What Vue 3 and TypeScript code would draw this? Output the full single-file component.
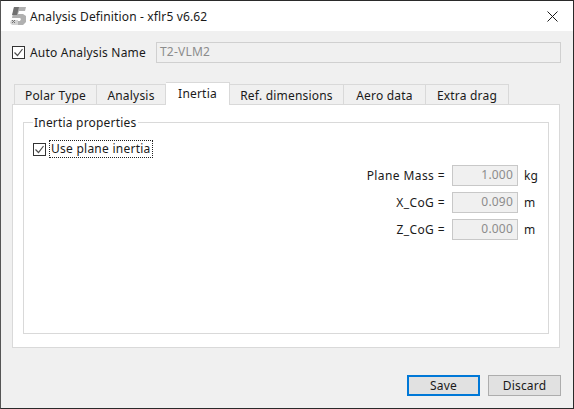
<script setup lang="ts">
const tabs: string[] = ['Polar Type', 'Analysis', 'Inertia', 'Ref. dimensions', 'Aero data', 'Extra drag']
const fields = [
  { label: 'Plane Mass =', value: '1.000', unit: 'kg' },
  { label: 'X_CoG =', value: '0.090', unit: 'm' },
  { label: 'Z_CoG =', value: '0.000', unit: 'm' },
]
const widths: Record<string, number> = { 'Polar Type': 83, Analysis: 69, Inertia: 64, 'Ref. dimensions': 114, 'Aero data': 82, 'Extra drag': 83 }
</script>

<template>
  <div class="window">
    <header class="titlebar">
      <svg class="logo" width="18" height="20" viewBox="0 0 18 20">
        <path d="M5 1h12l-1 4H10L9 8h5l3 2v6l-3 3H8v-4h3l1-2-1-1H3z" fill="#b0b0b0" />
        <path d="M5 1h5L9 5 8 9H3z" fill="#707070" />
        <path d="M2 14h7v5H3l-2-2z" fill="#d2d2d2" />
        <path d="M3 14l3 3M6 14l-3 3" stroke="#707070" stroke-width="1" fill="none" />
      </svg>
      <span class="title">Analysis Definition - xflr5 v6.62</span>
      <svg class="close" width="11" height="11" viewBox="0 0 11 11">
        <path d="M.5.5l10 10M10.5.5l-10 10" stroke="#1a1a1a" stroke-width="1" fill="none" />
      </svg>
    </header>
    <main class="body">
      <div class="name-row">
        <span class="check">
          <svg width="11" height="11" viewBox="0 0 11 11"><path d="M1.5 5.5l3 3 5-6.5" stroke="#4d4d4d" stroke-width="1.2" fill="none" /></svg>
        </span>
        <span class="name-label">Auto Analysis Name</span>
        <div class="name-input">T2-VLM2</div>
      </div>
      <div class="tabs">
        <div
          v-for="t in tabs"
          :key="t"
          class="tab"
          :class="{ active: t === 'Inertia' }"
          :style="{ width: widths[t] + 'px' }"
        >{{ t }}</div>
      </div>
      <section class="panel">
        <fieldset class="group">
          <legend>Inertia properties</legend>
          <div class="use-row">
            <span class="check">
              <svg width="11" height="11" viewBox="0 0 11 11"><path d="M1.5 5.5l3 3 5-6.5" stroke="#4d4d4d" stroke-width="1.2" fill="none" /></svg>
            </span>
            <span class="focus">Use plane inertia</span>
          </div>
          <div class="fields">
            <div v-for="f in fields" :key="f.label" class="field">
              <span class="flabel">{{ f.label }}</span>
              <div class="finput">{{ f.value }}</div>
              <span class="funit">{{ f.unit }}</span>
            </div>
          </div>
        </fieldset>
      </section>
      <footer class="actions">
        <button class="btn primary">Save</button>
        <button class="btn">Discard</button>
      </footer>
    </main>
  </div>
</template>

<style>
html, body { margin: 0; padding: 0; }
</style>

<style scoped>
.window {
  width: 574px;
  height: 409px;
  box-sizing: border-box;
  border: 1px solid #2a2a2a;
  border-left-color: #555;
  display: flex;
  flex-direction: column;
  font-family: "Noto Sans", "Open Sans", sans-serif;
  font-size: 12px;
  color: #1a1a1a;
  background: #f0f0f0;
}
.titlebar {
  height: 30px;
  flex: none;
  background: #fff;
  display: flex;
  align-items: center;
  padding: 0 15px 0 8px;
}
.logo { flex: none; }
.title { margin-left: 3px; font-size: 12px; letter-spacing: 0.14px; }
.close { margin-left: auto; }
.body {
  flex: 1;
  display: flex;
  flex-direction: column;
  padding: 0 12px 0 11px;
  min-height: 0;
}
.name-row {
  display: flex;
  align-items: center;
  margin-top: 11px;
  height: 21px;
}
.check {
  width: 13px;
  height: 13px;
  box-sizing: border-box;
  border: 1px solid #333;
  background: #fff;
  display: flex;
  align-items: center;
  justify-content: center;
  flex: none;
}
.name-label { margin-left: 5px; letter-spacing: 0.2px; }
.name-input {
  margin-left: auto;
  width: 405px;
  height: 21px;
  box-sizing: border-box;
  border: 1px solid #d0d0d0;
  background: #f0f0f0;
  color: #8c8c8c;
  padding-left: 3px;
  line-height: 18px;
  letter-spacing: 0.2px;
  font-size: 12px;
}
.tabs {
  display: flex;
  margin-top: 19px;
  padding-left: 2px;
  height: 23px;
  align-items: flex-end;
  position: relative;
  z-index: 1;
  margin-bottom: -1px;
}
.tab {
  box-sizing: border-box;
  height: 21px;
  border: 1px solid #d9d9d9;
  border-left: none;
  background: #f0f0f0;
  text-align: center;
  line-height: 21px;
  letter-spacing: 0.2px;
}
.tab:first-child { border-left: 1px solid #d9d9d9; }
.tab.active {
  height: 23px;
  background: #fff;
  border-bottom: none;
  line-height: 21px;
}
.panel {
  width: 548px;
  height: 244px;
  box-sizing: border-box;
  border: 1px solid #d9d9d9;
  background: #fff;
  padding: 9px 10px 13px 10px;
  flex: none;
}
.group {
  box-sizing: border-box;
  height: 100%;
  margin: 0;
  border: 1px solid #d9d9d9;
  padding: 0;
  min-width: 0;
  display: block;
  position: relative;
}
.group legend {
  margin-left: 9px;
  padding: 0 1px;
  letter-spacing: 0.2px;
  line-height: 17px;
}
.use-row {
  display: flex;
  align-items: center;
  margin-top: 9px;
  margin-left: 9px;
  height: 18px;
}
.focus {
  margin-left: 3px;
  border: 1px dotted #222;
  height: 18px;
  box-sizing: border-box;
  line-height: 15px;
  padding: 0 1px;
  letter-spacing: 0.25px;
}
.fields {
  display: flex;
  flex-direction: column;
  gap: 6px;
  margin-top: 7px;
  align-items: flex-end;
  padding-right: 3px;
}
.field {
  display: flex;
  align-items: center;
  height: 21px;
}
.flabel { letter-spacing: 0.4px; margin-right: 7px; }
.finput {
  width: 66px;
  height: 21px;
  box-sizing: border-box;
  border: 1px solid #c8c8c8;
  background: #f0f0f0;
  color: #8c8c8c;
  text-align: right;
  padding-right: 4px;
  line-height: 18px;
  letter-spacing: 0.2px;
}
.funit { width: 21px; margin-left: 6px; letter-spacing: 0.2px; }
.actions {
  display: flex;
  justify-content: flex-end;
  gap: 8px;
  margin-top: 27px;
}
.btn {
  width: 73px;
  height: 21px;
  box-sizing: border-box;
  border: 1px solid #adadad;
  background: #e1e1e1;
  font: inherit;
  color: #1a1a1a;
  padding: 0;
  line-height: 17px;
  letter-spacing: 0.2px;
}
.btn.primary { border: 2px solid #0078d7; }
</style>
